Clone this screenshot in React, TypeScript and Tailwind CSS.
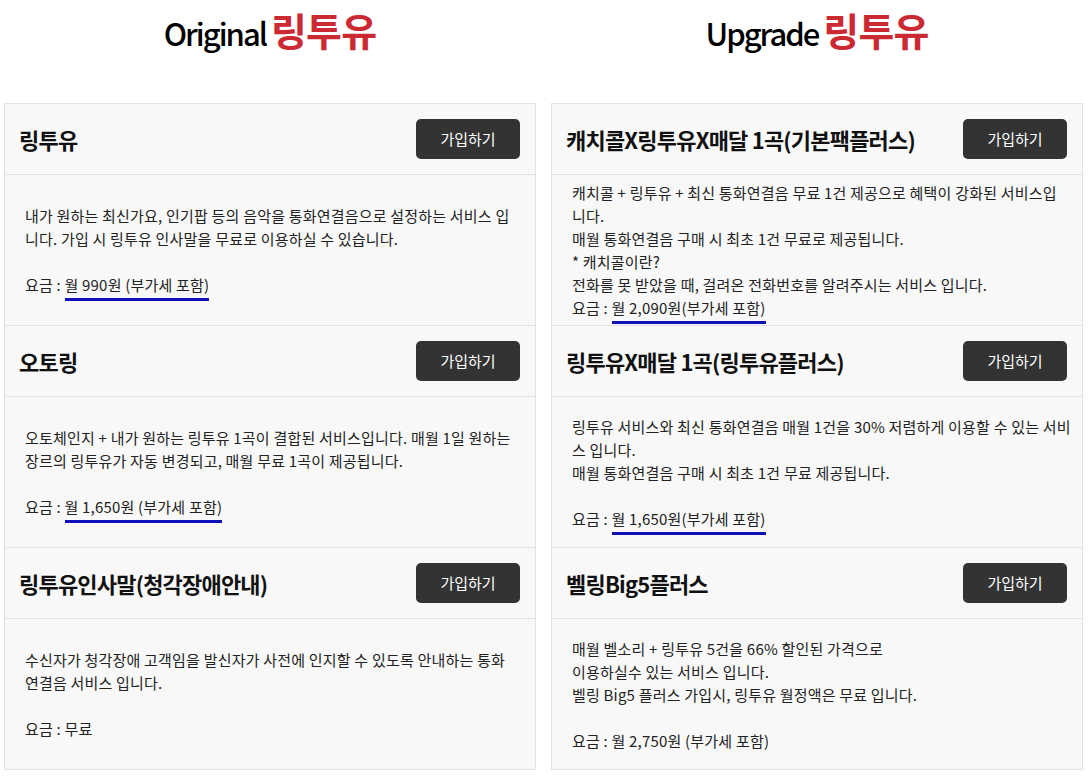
const original = [
  {
    title: "링투유",
    lines: [
      "내가 원하는 최신가요, 인기팝 등의 음악을 통화연결음으로 설정하는 서비스 입",
      "니다. 가입 시 링투유 인사말을 무료로 이용하실 수 있습니다.",
    ],
    gap: true,
    price: "월 990원 (부가세 포함)",
    mark: true,
  },
  {
    title: "오토링",
    lines: [
      "오토체인지 + 내가 원하는 링투유 1곡이 결합된 서비스입니다. 매월 1일 원하는",
      "장르의 링투유가 자동 변경되고, 매월 무료 1곡이 제공됩니다.",
    ],
    gap: true,
    price: "월 1,650원 (부가세 포함)",
    mark: true,
  },
  {
    title: "링투유인사말(청각장애안내)",
    lines: [
      "수신자가 청각장애 고객임을 발신자가 사전에 인지할 수 있도록 안내하는 통화",
      "연결음 서비스 입니다.",
    ],
    gap: true,
    price: "무료",
    mark: false,
  },
];

const upgrade = [
  {
    title: "캐치콜X링투유X매달 1곡(기본팩플러스)",
    lines: [
      "캐치콜 + 링투유 + 최신 통화연결음 무료 1건 제공으로 혜택이 강화된 서비스입",
      "니다.",
      "매월 통화연결음 구매 시 최초 1건 무료로 제공됩니다.",
      "* 캐치콜이란?",
      "전화를 못 받았을 때, 걸려온 전화번호를 알려주시는 서비스 입니다.",
    ],
    gap: false,
    price: "월 2,090원(부가세 포함)",
    mark: true,
  },
  {
    title: "링투유X매달 1곡(링투유플러스)",
    lines: [
      "링투유 서비스와 최신 통화연결음 매월 1건을 30% 저렴하게 이용할 수 있는 서비",
      "스 입니다.",
      "매월 통화연결음 구매 시 최초 1건 무료 제공됩니다.",
    ],
    gap: true,
    price: "월 1,650원(부가세 포함)",
    mark: true,
  },
  {
    title: "벨링Big5플러스",
    lines: [
      "매월 벨소리 + 링투유 5건을 66% 할인된 가격으로",
      "이용하실수 있는 서비스 입니다.",
      "벨링 Big5 플러스 가입시, 링투유 월정액은 무료 입니다.",
    ],
    gap: true,
    price: "월 2,750원 (부가세 포함)",
    mark: false,
  },
];

type Plan = (typeof original)[number];

function PlanCard({ plan }: { plan: Plan }) {
  return (
    <div className="border-t border-[#e2e2e2] first:border-t-0">
      <div className="h-[71px] flex items-center justify-between pl-[14px] pr-[15px] border-b border-[#e2e2e2]">
        <h3 className="text-[22px] font-bold text-[#111] tracking-[-0.8px]">{plan.title}</h3>
        <button className="w-[104px] h-[40px] rounded-[5px] bg-[#333333] text-white text-[15px]">
          가입하기
        </button>
      </div>
      <div className="h-[150px] flex items-center px-[20px]">
        <div className="text-[15px] leading-[23px] text-[#222] tracking-[0.2px] whitespace-nowrap">
          {plan.lines.map((l) => (
            <p key={l}>{l}</p>
          ))}
          {plan.gap && <p className="h-[23px]"></p>}
          <p>
            요금 :{" "}
            <span className={plan.mark ? "border-b-[3px] border-[#1010b8] pb-[3px]" : ""}>
              {plan.price}
            </span>
          </p>
        </div>
      </div>
    </div>
  );
}

function Column({ label, plans }: { label: string; plans: Plan[] }) {
  return (
    <div>
      <div className="h-[103px] flex justify-center pt-[8px]">
        <h2 className="flex items-baseline leading-[42px] text-black">
          <span className="text-[31px] font-medium tracking-[-2px]">{label}</span>
          <span className="ml-[5px] text-[39px] text-[#cc2a33] font-bold tracking-[-0.8px]">링투유</span>
        </h2>
      </div>
      <div className="border border-[#e2e2e2] bg-[#f8f8f8]">
        {plans.map((p) => (
          <PlanCard key={p.title} plan={p} />
        ))}
      </div>
    </div>
  );
}

export default function App() {
  return (
    <div
      className="w-[1088px] h-[777px] bg-white overflow-hidden"
      style={{ fontFamily: '"Noto Sans CJK KR", "Noto Sans", sans-serif' }}
    >
      <div className="grid grid-cols-2 gap-[15px] pl-[4px] pr-[5px]">
        <Column label="Original" plans={original} />
        <Column label="Upgrade" plans={upgrade} />
      </div>
    </div>
  );
}
